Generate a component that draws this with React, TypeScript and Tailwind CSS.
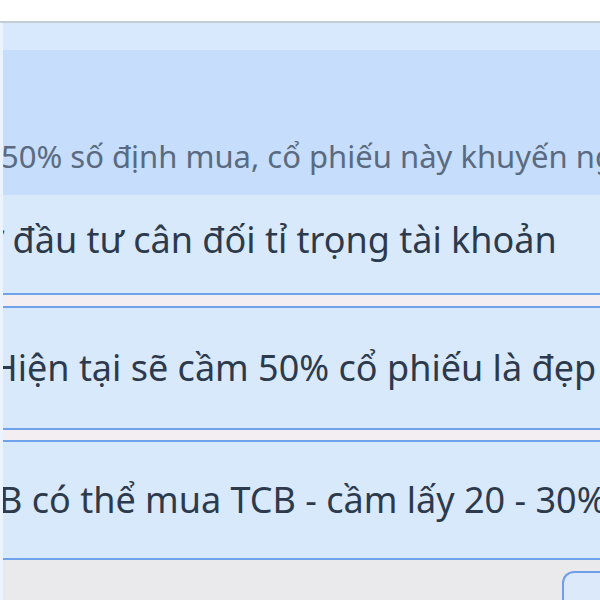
export default function App() {
  return (
    <div className="w-[600px] h-[600px] overflow-hidden bg-white pt-[21px] font-['Noto_Sans','Open_Sans',sans-serif]">
      <div className="flex flex-col h-[579px] border-t-2 border-[#c4ccd8]">
        <div className="flex flex-col border-l-[3px] border-l-[#eaf3fe] flex-1">
          {/* header band */}
          <div className="h-[27px] shrink-0 bg-[#d8e8fd]" />
          <div className="h-[145px] shrink-0 bg-[#c6defc] flex items-end pb-[23px] overflow-hidden">
            <p className="whitespace-nowrap text-[31px] leading-none text-[#5a6a80] -ml-[2px]">
              50% số định mua, cổ phiếu này khuyến nghị
            </p>
          </div>

          {/* row 1 */}
          <div className="h-[100px] shrink-0 bg-[#d9e9fc] border-b-2 border-[#6ea2ea] flex items-center overflow-hidden">
            <p className="whitespace-nowrap text-[36px] leading-none text-[#2d3a4c] -ml-[22px] pb-[8px]">
              ở đầu tư cân đối tỉ trọng tài khoản
            </p>
          </div>
          <div className="h-[11px] shrink-0 bg-[#f2eef1]" />

          {/* row 2 */}
          <div className="h-[124px] shrink-0 bg-[#d9e9fc] border-y-2 border-[#6ea2ea] flex items-center overflow-hidden">
            <p className="whitespace-nowrap text-[36px] leading-none text-[#2d3a4c] -ml-[12px]">
              Hiện tại sẽ cầm 50% cổ phiếu là đẹp
            </p>
          </div>
          <div className="h-[10px] shrink-0 bg-[#f2eef1]" />

          {/* row 3 */}
          <div className="h-[120px] shrink-0 bg-[#d9e9fc] border-y-2 border-[#6ea2ea] flex items-center overflow-hidden">
            <p className="whitespace-nowrap text-[36px] leading-none text-[#2d3a4c] -ml-[4px]">
              B có thể mua TCB - cầm lấy 20 - 30%
            </p>
          </div>

          {/* footer */}
          <div className="flex-1 bg-[#eaeaed] flex justify-end items-start pt-[11px] border-b-[3px] border-white">
            <div className="w-[38px] h-[40px] rounded-tl-[12px] border-l-2 border-t-2 border-[#6e9fe8] bg-[#dbe9fb]" />
          </div>
        </div>
      </div>
    </div>
  )
}
